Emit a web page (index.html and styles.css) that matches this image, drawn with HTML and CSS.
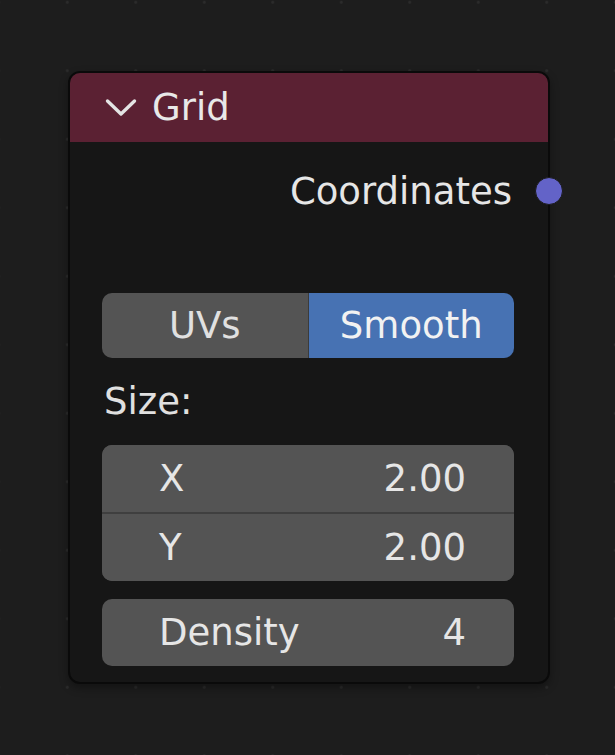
FILE: index.html
```html
<!DOCTYPE html>
<html>
<head>
<meta charset="utf-8">
<link rel="stylesheet" href="styles.css">
</head>
<body>
<div class="node">
  <div class="header">
    <svg class="chev" width="32" height="20" viewBox="0 0 32 20"><path d="M2.5 3 L16 16 L29.5 3" fill="none" stroke="#e4e4e4" stroke-width="3.4" stroke-linecap="round" stroke-linejoin="round"/></svg>
    <span class="title">Grid</span>
  </div>
  <div class="body">
    <div class="output">
      <span>Coordinates</span>
      <span class="socket"></span>
    </div>
    <div class="widgets">
      <div class="enum">
        <div class="opt">UVs</div>
        <div class="opt active">Smooth</div>
      </div>
      <div class="label">Size:</div>
      <div class="group">
        <div class="field"><span>X</span><span>2.00</span></div>
        <div class="field sep"><span>Y</span><span>2.00</span></div>
      </div>
      <div class="field single"><span>Density</span><span>4</span></div>
    </div>
  </div>
</div>
</body>
</html>
```
FILE: styles.css
```css
html, body {
  margin: 0;
  padding: 0;
}
body {
  width: 615px;
  height: 755px;
  overflow: hidden;
  background-color: #1d1d1d;
  background-image: radial-gradient(circle, #2c2c2c 1.2px, transparent 1.6px);
  background-size: 68.5px 68.5px;
  background-position: 33px -32px;
  font-family: "DejaVu Sans", sans-serif;
  font-size: 37px;
  color: #e6e6e6;
  padding: 71px 0 0 68px;
  box-sizing: border-box;
}
.node {
  position: relative;
  width: 478px;
  background: #161616;
  border: 2px solid #0a0a0a;
  border-radius: 12px;
  box-shadow: 0 4px 8px rgba(0,0,0,0.35);
}
.header {
  height: 69px;
  background: #5b2133;
  border-radius: 10px 10px 0 0;
  display: flex;
  align-items: center;
  padding-left: 35px;
  gap: 15px;
  color: #e8e8e8;
}
.chev {
  display: block;
  margin-top: 1px;
}
.title {
  line-height: 1;
}
.body {
  padding: 0 34px 16px 32px;
}
.output {
  position: relative;
  height: 98px;
  display: flex;
  align-items: center;
  justify-content: flex-end;
  padding-right: 2px;
}
.socket {
  position: absolute;
  right: -49px;
  top: 35px;
  width: 26px;
  height: 26px;
  border-radius: 50%;
  background: #6363c8;
  border: 1.5px solid #1a1a1a;
}
.widgets {
  display: flex;
  flex-direction: column;
  margin-top: 53px;
}
.enum {
  display: flex;
  height: 65px;
  border-radius: 10px;
  overflow: hidden;
}
.opt {
  flex: 1;
  display: flex;
  align-items: center;
  justify-content: center;
  background: #545454;
  color: #e0e0e0;
}
.opt.active {
  background: #4772b3;
  color: #f2f2f2;
  border-left: 1px solid #3b3b3b;
}
.label {
  height: 87px;
  display: flex;
  align-items: center;
  padding-left: 2px;
  color: #e0e0e0;
}
.group {
  border-radius: 10px;
  overflow: hidden;
  background: #545454;
}
.field {
  height: 67px;
  display: flex;
  align-items: center;
  justify-content: space-between;
  padding: 0 48px 0 57px;
  background: #545454;
  color: #e6e6e6;
}
.field.sep {
  border-top: 2px solid #3f3f3f;
}
.field.single {
  margin-top: 18px;
  border-radius: 10px;
}
```
